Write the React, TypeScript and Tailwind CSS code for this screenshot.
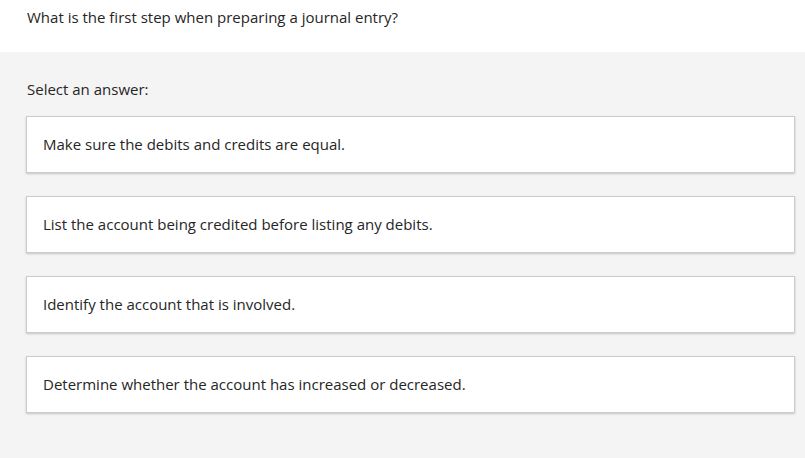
const answers = [
  "Make sure the debits and credits are equal.",
  "List the account being credited before listing any debits.",
  "Identify the account that is involved.",
  "Determine whether the account has increased or decreased.",
];

export default function App() {
  return (
    <div
      className="min-h-[458px] bg-[#f4f4f4] text-[15px] text-[#262626]"
      style={{ fontFamily: '"Segoe UI", "Open Sans", sans-serif' }}
    >
      <div className="h-[52px] bg-white px-[27px] pt-[7px] leading-[20px]">
        What is the first step when preparing a journal entry?
      </div>
      <div className="px-[26px] pt-[27px]">
        <div className="pl-px leading-[20px]">Select an answer:</div>
        <div className="mt-[17px] flex w-[769px] flex-col gap-[23px]">
          {answers.map((a) => (
            <div
              key={a}
              className="flex h-[57px] items-center border border-[#cccccc] bg-white px-4 shadow-[0_1px_2px_rgba(0,0,0,0.2)]"
            >
              {a}
            </div>
          ))}
        </div>
      </div>
    </div>
  );
}
